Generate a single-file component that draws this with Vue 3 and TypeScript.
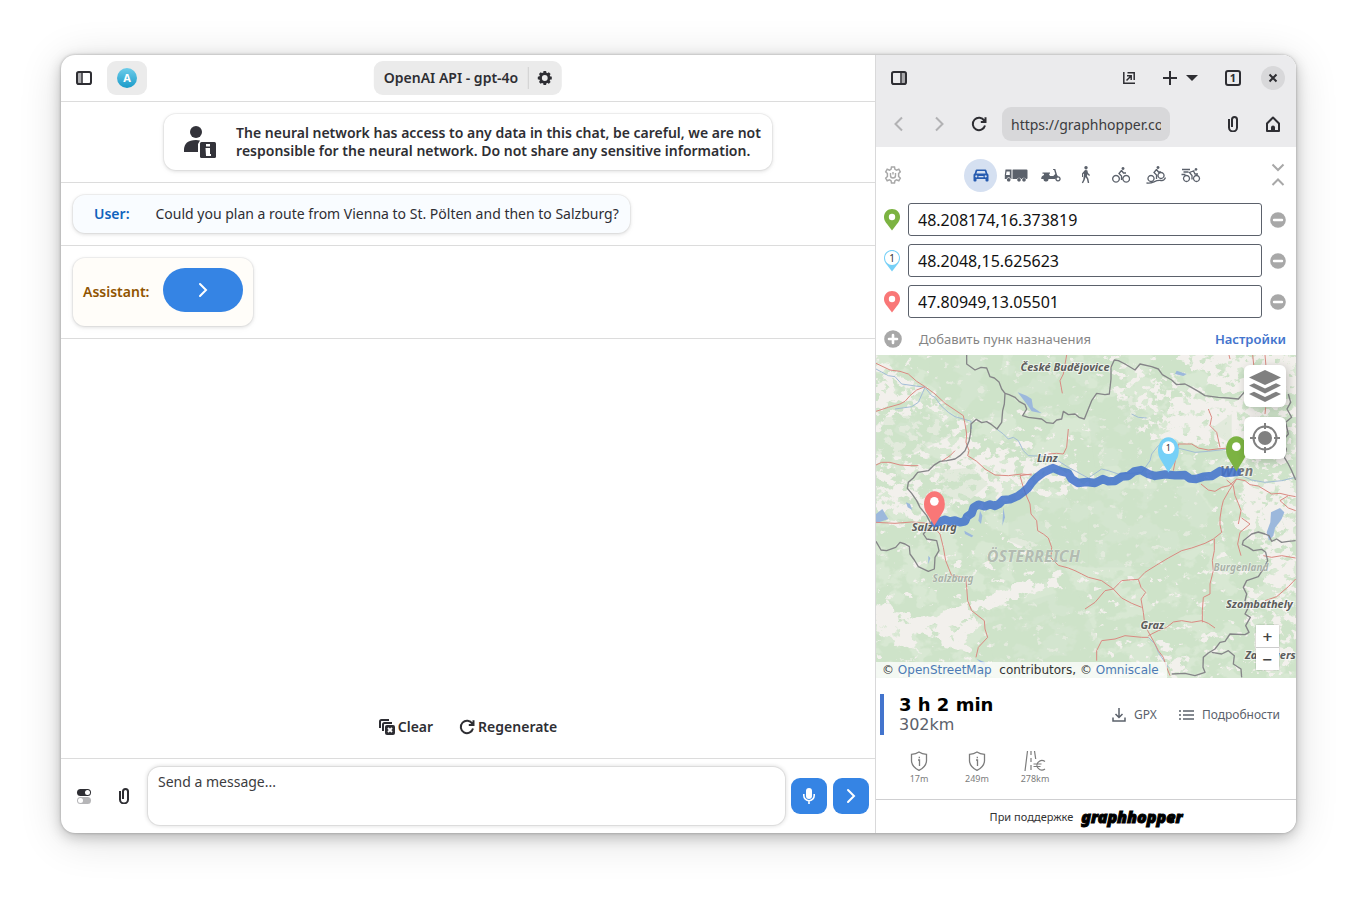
<script setup lang="ts">
import { ref } from 'vue'

interface Stop { id: string; value: string; kind: 'start' | 'via' | 'end'; color: string }
interface Profile { name: string; width: number; box: string; fill?: string; stroke?: string }

const stops = ref<Stop[]>([
  { id: 'stop-1', value: '48.208174,16.373819', kind: 'start', color: '#7cb342' },
  { id: 'stop-2', value: '48.2048,15.625623', kind: 'via', color: '#76d0f7' },
  { id: 'stop-3', value: '47.80949,13.05501', kind: 'end', color: '#f97777' },
])

const profiles: Profile[] = [
  {
    name: 'Car', width: 16, box: '0 0 16 16',
    fill: 'M3.6 2.5h8.8q.8 0 1 .8l1 3.2q1.1.4 1.1 1.7v5.3q0 1-1 1h-1q-1 0-1-1V12h-9v1.5q0 1-1 1h-1q-1 0-1-1V8.200q0-1.300 1.100-1.700l1-3.200q.2-.8 1-.8zM4.200 4l-.8 2.400h9.200L11.800 4zM3.300 8.200a1.100 1.100 0 1 0 .01 0zM12.700 8.200a1.100 1.100 0 1 0 .01 0zM5.500 9v1.200h5V9z',
  },
  {
    name: 'Truck', width: 24, box: '0 0 24 16',
    fill: 'M1.500 2.500h6v9.500h-.6a2.300 2.300 0 0 0-4.400 0H.8V8zM2.600 4.500L2 8h3.800V4.500zM9 2.500h13.500q1 0 1 1v7.500q0 1-1 1h-.5a2.300 2.300 0 0 0-4.200 0h-.6a2.300 2.300 0 0 0-4.200 0H8.500V3q0-.5.5-.5zM4.700 11a1.800 1.800 0 1 0 .01 0zM15 11a1.800 1.800 0 1 0 .01 0zM20 11a1.800 1.800 0 1 0 .01 0z',
  },
  {
    name: 'Scooter', width: 20, box: '0 0 20 16',
    fill: 'M1.500 5.500H9v1.300H7.800L9 9h3.300l2-2-1.200-4h-1V2h2.200l1.800 6 1.200 1.500q-2 0-3 2.500H7.500a2.500 2.500 0 0 1-5 0H.2Q0 9 3 8V6.800H1.500z',
    stroke: 'M17 9.900a2 2 0 1 0 .01 0M5 10.800a1.400 1.400 0 1 0 .01 0',
  },
  {
    name: 'Foot', width: 18, box: '0 0 16 18',
    fill: 'M8 0a1.700 1.700 0 1 0 .01 0zM7 4l2.300.2L10 7l2 2-.8.9-2-1.700-.2 2 1.400 2.500.8 4.300H9.800L8.900 13 7.500 11l-.8 3-1.700 3.200-1.200-.5L5.300 13.500 6 7.500 5 8.300V11H4V7.600z',
  },
  {
    name: 'Bike', width: 18, box: '0 0 18 18',
    fill: 'M11 1a1.500 1.500 0 1 0 .01 0z',
    stroke: 'M4 9.500a3.300 3.300 0 1 0 .01 0M14.200 9.500a3.300 3.300 0 1 0 .01 0M9.500 4.500L7 7.500 9.500 10v4M9.500 4.500L11.500 7h2.500',
  },
  {
    name: 'Mountain bike', width: 20, box: '0 0 20 18',
    fill: 'M12 0a1.500 1.500 0 1 0 .01 0z',
    stroke: 'M5 9.500a3 3 0 1 0 .01 0M15 6.500a3 3 0 1 0 .01 0M10.500 3.500L8 6.500 10.500 9v4M10.500 3.500L12.500 6h2.500M.5 17q4 .5 7.500-1.200T15 14.500t4.500-3',
  },
  {
    name: 'Racing bike', width: 20, box: '0 0 20 18',
    fill: 'M15 2a1.400 1.400 0 1 0 .01 0z',
    stroke: 'M5.500 9.500a3 3 0 1 0 .01 0M15.500 9.500a3 3 0 1 0 .01 0M13.500 4.500L8.500 6.500 11 9.500v4M12.500 5L14 8h3M1 3.500h8M2.500 6h5M.5 8.500h4',
  },
]

const pinPath = 'M8 0C3.500 0 0 3.500 0 8c0 2 .6 3.700 1.700 5.300L8 21.500l6.300-8.200C15.400 11.700 16 10 16 8 16 3.500 12.500 0 8 0z'
const reloadPath = 'M13.300 4.700A6.200 6.200 0 1 0 14 9.500M9.800 6h4.700V1.300'

const route = 'M180 507L195 503 210 497 225 502 240 499 255 505 270 502 276 488 290 478 296 460 310 452 330 457 345 451 360 456 372 450 384 438 405 436 429 426 445 414 459 402 470 386 483 372 505 355 534 342 558 352 579 357 590 375 609 387 635 384 660 387 684 375 700 382 720 381 740 368 760 366 778 352 798 348 820 360 840 366 870 361 900 364 930 363 945 374 963 375 985 368 1011 366 1035 351 1050 357 1086 354'

const borders = [
  'M275 3L275 30 300 48 318 40 335 42 345 68 358 72 372 84 380 105 390 118 388 150 383 170 380 205 366 225 350 212 335 203 320 206 304 196 288 210 287 235 282 262 270 290 255 305 240 315 215 320 195 322 175 335 160 350 128 355 115 372 100 385 97 403 110 418 125 440 135 460 155 485 168 510 155 528 145 540 155 555 185 560 192 590 180 610 178 645 160 652 130 638 118 618 105 600 103 578 90 570 75 565 62 580 35 590 18 588 3 562',
  'M390 118L402 122 420 130 432 142 450 152 455 165 443 185 460 190 500 195 515 206 535 208 545 198 560 195 565 172 580 182 600 180 612 190 628 195 640 165 650 140 665 118 690 122 703 120 708 75 708 40 718 18 730 20 750 30 780 48 795 30 830 38 850 45 862 62 890 78 905 92 930 90 945 98 970 112 990 125 1030 130 1060 132 1090 135 1110 112',
  'M1240 120L1247 145 1236 165 1250 190 1232 205 1240 240 1222 262 1234 285 1228 310 1240 330 1250 350 1262 378',
  'M1262 560L1240 562 1220 565 1205 555 1190 562 1182 545 1170 540 1150 534 1130 540 1105 560 1102 572 1120 580 1135 590 1160 586 1172 595 1178 620 1168 640 1150 668 1115 680 1105 700 1115 720 1110 740 1120 760 1110 780 1126 790 1112 815 1122 835 1110 842 1065 840 1050 862 1035 865 1020 885 1000 897 985 910 984 940 990 955 960 965 930 958 890 960',
  'M1010 895L1040 900 1060 890 1078 905 1075 930 1098 945 1100 970',
]
const roads = [
  'M3 28L45 48 75 52 100 60 125 82 150 98 180 120 210 148 240 168 265 185 270 210 275 240 273 265 282 290 278 305 305 322 330 345 360 363 400 365 440 360 470 363',
  'M150 98L125 108 105 125 90 142 75 150 40 160 3 172', 'M240 290L225 305 200 322', 'M3 333L20 325 45 325 75 333 105 335 130 335',
  'M470 360L435 365 442 390 452 420 465 450 468 480 485 500 488 530 505 540 520 552 530 580 528 612 550 634 580 642 600 650 640 670 680 680 715 705 740 680 760 678 790 676 810 655 850 630 880 612 920 590 950 582 990 568 1015 555 1040 535 1035 512 1035 492 1040 460 1045 440 1062 410 1085 375',
  'M580 225L575 280 565 300 545 298 520 300', 'M575 3L565 60 555 80 562 118',
  'M3 505L60 508 110 504 165 508 195 540 205 580 212 620 230 665 272 670 275 700 278 740 290 770 328 800 330 825 338 850 310 880 303 910',
  'M630 765L660 745 690 710 715 705M715 705L740 732 770 748 800 760',
  'M790 676L798 700 812 715 798 735 805 775 808 800 818 830 832 855 850 890 865 910 875 940 885 965',
  'M820 850L800 850 780 848 750 845 720 855 680 860 665 890 665 920',
  'M820 845L850 830 875 820 895 804 920 800 950 805 980 800 1000 808 1020 822', 'M1018 555L1018 590 1012 620 1015 650 1005 690 1005 720 985 730 982 770 982 805',
  'M1085 375L1110 380 1125 392 1150 396 1170 408 1190 420 1215 418 1240 424 1262 428', 'M1055 378L1075 395 1080 425 1090 448 1098 470 1090 510',
  'M895 350L905 300 910 270 950 270 970 282 1000 288 1035 284 1060 282', 'M1000 165L1010 190 1005 215 1025 235 1035 280',
  'M978 390L1000 408 1020 412 1040 400 1062 395 1085 375', 'M1133 3L1138 50M1170 3L1175 60M1172 160L1170 180',
  'M1165 605L1190 610 1220 605 1262 612', 'M1262 675L1240 698 1205 728 1170 740', 'M1100 492L1125 510 1095 535 1088 570 1098 605',
  'M1240 425L1215 440 1240 462 1262 470', 'M1065 15L1062 3',
]
const rivers = [
  'M3 45L40 65 60 68 80 90 150 100 170 125 180 130 198 155 220 175 240 188 265 195 288 202 290 225M365 225L385 240 400 255 415 250 430 260 445 290 460 305 530 308 580 340 640 372 680 345 700 350 730 360 800 356 825 320 830 300 850 275 900 280 960 295 1000 292 1060 285',
  'M60 165L110 158 130 145 150 100', 'M1100 365L1130 378 1170 385 1220 380 1262 370', 'M820 850L840 870 850 895 880 940',
  'M770 180L790 190 815 192',
]
const lakes = [
  'M428 115L455 125 470 135 474 160 500 178 470 172 455 150z', 'M3 480L22 465 40 495 3 508z',
  'M268 530L295 545 290 550 270 540z', 'M315 470L322 485 318 510 310 500z', 'M385 460L390 490 382 515z',
  'M1188 475L1215 462 1228 475 1220 495 1200 522 1195 545 1182 560 1175 535 1186 505z', 'M160 605L166 612 160 630z',
  'M93 445L105 450 112 468 98 460z', 'M905 50L935 60 925 66 900 60z', 'M305 915L330 925 328 935z',
]
/* Farmland density: the higher the weight, the less forest is left. */
const open: { d: string; o: number }[] = [
  { d: 'M0 0H1270V975H0z', o: 0.16 },
  { d: 'M0 20L100 70 160 110 280 200 300 270 420 240 640 350V420L450 430 300 440 160 500H0z', o: 0.38 },
  { d: 'M0 20L140 100 100 150 0 165zM260 200L310 300 560 330 630 400 420 380 260 440 200 390z', o: 0.45 },
  { d: 'M0 360L90 370 160 500H0z', o: 0.3 },
  { d: 'M720 20L860 50 1040 140 1262 130V380L1080 350 1060 270 830 260 720 150z', o: 0.36 },
  { d: 'M880 130L1100 140 1120 340 1020 270 880 270zM900 0H1262V120L1050 120zM1100 380L1262 380V700L1180 690 1160 570 1080 520z', o: 0.7 },
  { d: 'M0 745L50 760 110 790 180 790 270 740 290 790 320 810 270 850 300 900 230 890 180 840 110 840 120 890 0 830z', o: 0.95 },
  { d: 'M280 750L340 725 390 700 450 670 500 690 565 645 545 700 450 720 400 750 300 775zM400 560L450 550 490 570 440 600zM300 630L340 620 360 650zM210 620L260 615 250 650z', o: 0.9 },
  { d: 'M1120 700L1262 660V960H1090L1130 850z', o: 0.4 },
  { d: 'M830 830L900 880 940 960 870 970zM920 830L1060 860 1030 880 930 850z', o: 0.5 },
]
const woods = [
  'M165 0H380V190H300L160 90z', 'M30 190L180 180 240 240 90 310 0 300z', 'M200 350L290 340 340 390 280 440 200 430z',
  'M400 20H640V160L560 170 480 190 400 110z', 'M400 420L640 440V640L540 620 400 560z', 'M640 410L960 400 1060 540 830 640 640 640z',
  'M640 200L780 120 800 330 660 340z', 'M330 780L600 700 680 880 600 970 360 940z', 'M1000 230L1070 180V270z',
]
</script>

<template>
  <div class="desktop">
    <main class="window">
      <section class="chat">
        <header class="bar">
          <button class="icon-btn" aria-label="Toggle sidebar">
            <svg width="16" height="16" viewBox="0 0 16 16"><rect x="1.500" y="2.500" width="4" height="11" fill="#b0b0b3" /><rect x="1" y="2" width="14" height="12" rx="1.800" class="ln" /><path d="M6 2v12" class="ln thin" /></svg>
          </button>
          <button class="avatar-btn" aria-label="Profile"><span class="avatar">A</span></button>
          <div class="model">
            <button class="model-name">OpenAI API - gpt-4o</button>
            <button class="model-gear" aria-label="Model settings">
              <svg width="16" height="16" viewBox="-8 -8 16 16"><circle r="4.300" fill="none" stroke="#2e2e33" stroke-width="2.800" /><g fill="#2e2e33"><rect v-for="n in 8" :key="n" x="-1.400" y="-7" width="2.800" height="3" rx=".5" :transform="`rotate(${n * 45})`" /></g></svg>
            </button>
          </div>
        </header>

        <div class="row center">
          <div class="card notice">
            <svg width="32" height="32" viewBox="0 0 32 32" fill="#33333a"><circle cx="12" cy="6" r="6" /><path d="M0 26v-2Q0 14 12 14q2.500 0 4 .4L14 18v8z" /><rect x="16" y="16" width="16" height="16" rx="1.500" /><path d="M22 18h4v2.500h-4zM21.500 22H26v6h1v2h-5z" fill="#fff" /></svg>
            <p>The neural network has access to any data in this chat, be careful, we are not<br>responsible for the neural network. Do not share any sensitive information.</p>
          </div>
        </div>

        <div class="row">
          <article class="card user">
            <b>User:</b><span>Could you plan a route from Vienna to St. Pölten and then to Salzburg?</span>
          </article>
        </div>

        <div class="row">
          <article class="card assistant">
            <b>Assistant:</b>
            <button class="pill" aria-label="Continue"><svg width="16" height="16" viewBox="0 0 16 16"><path d="M5 2l6 6-6 6" class="wt" /></svg></button>
          </article>
        </div>

        <div class="actions">
          <button class="text-btn">
            <svg width="16" height="16" viewBox="0 0 16 16"><path d="M1 9V2.500Q1 1 2.500 1H10M4 12V5.500Q4 4 5.500 4H13" class="ln" /><rect x="6" y="6" width="10" height="10" rx="2" fill="#2e2e33" /><path d="M9 9l4 4M13 9l-4 4" stroke="#fff" stroke-width="1.800" /></svg>Clear
          </button>
          <button class="text-btn">
            <svg width="16" height="16" viewBox="0 0 16 16"><path :d="reloadPath" class="ln" /></svg>Regenerate
          </button>
        </div>

        <footer class="composer">
          <button class="icon-btn" aria-label="Options">
            <svg width="16" height="16" viewBox="0 0 16 16"><rect x="1" y="1" width="14" height="7" rx="3.500" fill="#2e2e33" /><circle cx="11.500" cy="4.500" r="2.500" fill="#fff" /><rect x="1" y="9" width="14" height="7" rx="3.500" fill="#b6b6b8" /><circle cx="4.500" cy="12.500" r="2.500" fill="#fff" /></svg>
          </button>
          <button class="icon-btn" aria-label="Attach file">
            <svg width="16" height="16" viewBox="0 0 16 16"><path d="M4 3v8.500a4 4 0 0 0 8 0V3.500a2.500 2.500 0 0 0-5 0V11" class="ln" /></svg>
          </button>
          <textarea aria-label="Message" placeholder="Send a message..."></textarea>
          <button class="blue" aria-label="Record voice">
            <svg width="16" height="16" viewBox="0 0 16 16"><rect x="5" y="0" width="6" height="11" rx="3" fill="#fff" /><path d="M2.800 6v1.500a5.200 5.200 0 0 0 10.400 0V6M8 13v3" fill="none" stroke="#fff" stroke-width="1.600" /></svg>
          </button>
          <button class="blue" aria-label="Send"><svg width="16" height="16" viewBox="0 0 16 16"><path d="M5 2l6 6-6 6" class="wt" /></svg></button>
        </footer>
      </section>

      <aside class="side">
        <div class="tools">
          <div class="tool-row">
            <button class="icon-btn" aria-label="Toggle panel">
              <svg width="16" height="16" viewBox="0 0 16 16"><rect x="10.500" y="2.500" width="4" height="11" fill="#a8a8ab" /><rect x="1" y="2" width="14" height="12" rx="1.800" class="ln" /><path d="M10 2v12" class="ln thin" /></svg>
            </button>
            <span class="grow"></span>
            <button class="icon-btn detach" aria-label="Detach">
              <svg width="12" height="12" viewBox="0 0 12 12"><path d="M.8 0v11.200H12M4.500.8h6.700V8" class="ln thin" /><path d="M3.500 8.500L8 4M4 3.800h4.200V8" class="ln thin" /></svg>
            </button>
            <button class="icon-btn add" aria-label="New tab">
              <svg width="36" height="16" viewBox="0 0 36 16"><path d="M8 1v14M1 8h14" class="ln" /><path d="M24 5h12l-6 6z" fill="#2e2e33" /></svg>
            </button>
            <button class="icon-btn" aria-label="Tabs">
              <svg width="16" height="16" viewBox="0 0 16 16"><rect x="1" y="1" width="14" height="14" rx="2" class="ln" /><text x="8" y="12" text-anchor="middle" class="tab-no">1</text></svg>
            </button>
            <button class="close" aria-label="Close">
              <svg width="10" height="10" viewBox="0 0 10 10"><path d="M1.500 1.500l7 7M8.500 1.500l-7 7" class="ln" /></svg>
            </button>
          </div>
          <div class="tool-row">
            <button class="icon-btn" aria-label="Back"><svg width="16" height="16" viewBox="0 0 16 16"><path d="M11 1.500L4.500 8l6.500 6.500" class="dim" /></svg></button>
            <button class="icon-btn" aria-label="Forward"><svg width="16" height="16" viewBox="0 0 16 16"><path d="M5 1.500L11.500 8 5 14.500" class="dim" /></svg></button>
            <button class="icon-btn" aria-label="Reload"><svg width="16" height="16" viewBox="0 0 16 16"><path :d="reloadPath" class="ln" /></svg></button>
            <input class="url" aria-label="Address" value="https://graphhopper.com/maps/">
            <span class="grow"></span>
            <button class="icon-btn" aria-label="Attach page"><svg width="16" height="16" viewBox="0 0 16 16"><path d="M4 3v8.500a4 4 0 0 0 8 0V3.500a2.500 2.500 0 0 0-5 0V11" class="ln" /></svg></button>
            <button class="icon-btn" aria-label="Home"><svg width="16" height="16" viewBox="0 0 16 16"><path d="M2 7.500L8 1.500l6 6V15H2z" class="ln" stroke-linejoin="round" /><path d="M6 15v-3.500a2 2 0 0 1 4 0V15z" fill="#2e2e33" /></svg></button>
          </div>
        </div>

        <div class="page">
          <div class="profiles">
            <button aria-label="Profile settings">
              <svg width="18" height="18" viewBox="0 0 18 18"><path d="M7.500 1h3l.5 2.300 1.500.8 2.300-.9 1.500 2.600L14.600 7.500v3l1.700 1.700-1.500 2.600-2.300-.9-1.500.8-.5 2.300h-3L7 14.700l-1.500-.8-2.300.9-1.500-2.600L3.400 10.500v-3L1.700 5.800l1.500-2.600 2.300.9L7 3.300z" fill="none" stroke="#a8a8a8" stroke-width="1.500" /><path d="M6.500 7v2.500a2.500 2.500 0 0 0 5 0V7M9 6v2.500" fill="none" stroke="#a8a8a8" stroke-width="1.400" /></svg>
            </button>
            <div class="modes">
              <button v-for="(p, i) in profiles" :key="p.name" :class="['mode', { on: i === 0 }]" :aria-label="p.name">
                <svg :width="p.width" height="18" :viewBox="p.box"><path v-if="p.fill" :d="p.fill" fill="currentColor" fill-rule="evenodd" /><path v-if="p.stroke" :d="p.stroke" fill="none" stroke="currentColor" stroke-width="1.300" /></svg>
              </button>
            </div>
            <button aria-label="Collapse">
              <svg width="14" height="24" viewBox="0 0 14 24"><path d="M1.500 1.500L7 7l5.500-5.500M1.500 22L7 16.500l5.500 5.500" fill="none" stroke="#a8a8a8" stroke-width="2" /></svg>
            </button>
          </div>

          <div class="stops">
            <div v-for="s in stops" :key="s.id" class="stop">
              <label :for="s.id" :aria-label="`Stop ${s.value}`">
                <svg width="16" height="22" viewBox="0 0 16 22"><path :d="pinPath" :fill="s.color" /><circle cx="8" cy="8" :r="s.kind === 'via' ? 7 : 3.200" fill="#fff" /><text v-if="s.kind === 'via'" x="8" y="12" text-anchor="middle" class="pin-no">1</text></svg>
              </label>
              <input :id="s.id" v-model="s.value">
              <button aria-label="Remove stop"><svg width="16" height="16" viewBox="0 0 16 16"><circle cx="8" cy="8" r="7.800" fill="#a8a8a8" /><path d="M4 8h8" stroke="#fff" stroke-width="2.400" stroke-linecap="round" /></svg></button>
            </div>
            <div class="add-row">
              <button class="add-stop"><svg width="18" height="18" viewBox="0 0 18 18"><circle cx="9" cy="9" r="8.800" fill="#a8a8a8" /><path d="M5 9h8M9 5v8" stroke="#fff" stroke-width="2.600" stroke-linecap="round" /></svg><span>Добавить пунк назначения</span></button>
              <a href="#settings">Настройки</a>
            </div>
          </div>

          <div class="map">
            <svg class="tiles" viewBox="3 3 1260 969" preserveAspectRatio="xMidYMid slice" role="img" aria-label="Route map">
              <defs>
                <filter id="farmland" x="0" y="0" width="100%" height="100%" color-interpolation-filters="sRGB">
                  <feTurbulence type="fractalNoise" baseFrequency=".036 .042" numOctaves="5" seed="11" result="t" />
                  <feColorMatrix in="t" values="0 0 0 0 0  0 0 0 0 0  0 0 0 0 0  1 0 0 0 0" result="n" />
                  <feGaussianBlur in="SourceGraphic" stdDeviation="7" result="d" />
                  <feComposite in="d" in2="n" operator="arithmetic" k2=".5" k3="1" result="s" />
                  <feComponentTransfer in="s" result="m"><feFuncA type="linear" slope="12" intercept="-9" /></feComponentTransfer>
                  <feFlood flood-color="#f2f0ec" /><feComposite in2="m" operator="in" />
                </filter>
                <filter id="meadow" x="0" y="0" width="100%" height="100%" color-interpolation-filters="sRGB">
                  <feTurbulence type="fractalNoise" baseFrequency=".012 .016" numOctaves="4" seed="4" />
                  <feColorMatrix values="0 0 0 0 0  0 0 0 0 0  0 0 0 0 0  12 0 0 0 -6" result="m" />
                  <feFlood flood-color="#d8e8d3" /><feComposite in2="m" operator="in" />
                </filter>
              </defs>
              <rect width="1270" height="975" fill="#cee3c9" />
              <rect width="1270" height="975" filter="url(#meadow)" />
              <g filter="url(#farmland)"><path v-for="(a, i) in open" :key="i" :d="a.d" :opacity="a.o" /></g>
              <path v-for="w in woods" :key="w" :d="w" fill="#cee3c9" opacity=".45" />
              <g fill="none" stroke="#a3bdd6" stroke-width="3"><path v-for="r in rivers" :key="r" :d="r" /></g>
              <g fill="#9cb8dc"><path v-for="l in lakes" :key="l" :d="l" /></g>
              <g class="roads"><path v-for="r in roads" :key="r" :d="r" /></g>
              <g class="borders"><path v-for="b in borders" :key="b" :d="b" /></g>
              <g class="places">
                <text x="570" y="51">České Budějovice</text><text x="517" y="324">Linz</text>
                <text x="1085" y="366" class="city">Wien</text><text x="178" y="532">Salzburg</text>
                <text x="832" y="825">Graz</text><text x="1153" y="762">Szombathely</text><text x="1186" y="916" class="mid">Zalaegers</text>
                <text x="475" y="623" class="land">ÖSTERREICH</text><text x="234" y="683" class="state">Salzburg</text><text x="1098" y="650" class="state">Burgenland</text>
              </g>
              <path :d="route" class="route" />
              <g transform="translate(147 412) scale(3.900 4.800)"><path :d="pinPath" fill="#f97777" /></g>
              <circle cx="178" cy="442" r="13" fill="#fff" />
              <g transform="translate(849 250) scale(3.900 4.900)"><path :d="pinPath" fill="#76d0f7" /></g>
              <circle cx="880" cy="281" r="19" fill="#fff" /><text x="880" y="292" text-anchor="middle" class="via">1</text>
              <g transform="translate(1053 247) scale(3.900 4.900)"><path :d="pinPath" fill="#7cb342" /></g>
              <circle cx="1084" cy="278" r="13" fill="#fff" />
            </svg>
            <div class="map-tools">
              <button aria-label="Layers"><svg width="32" height="32" viewBox="0 0 32 32" fill="#808080"><path d="M16 0l16 7.500L16 15 0 7.500zM0 15.500l5-2.300 11 5.300 11-5.300 5 2.300L16 23.500zM0 24l5-2.300L16 27l11-5.300 5 2.300-16 8z" /></svg></button>
              <button aria-label="My location"><svg width="32" height="32" viewBox="0 0 32 32"><circle cx="16" cy="16" r="7" fill="#808080" /><circle cx="16" cy="16" r="11.500" fill="none" stroke="#808080" stroke-width="2" /><path d="M16 1v6M16 25v6M1 16h6M25 16h6" stroke="#808080" stroke-width="2" /></svg></button>
            </div>
            <div class="zoom"><button aria-label="Zoom in">+</button><button aria-label="Zoom out">−</button></div>
            <div class="credit">© <a href="#osm">OpenStreetMap</a>&nbsp; contributors, © <a href="#omniscale">Omniscale</a></div>
          </div>

          <div class="result">
            <div class="summary">
              <div class="totals"><strong>3 h 2 min</strong><span>302km</span></div>
              <button><svg width="14" height="14" viewBox="0 0 14 14"><path d="M7 0v9M3.500 6L7 9.500 10.500 6M1 9.500V13h12V9.500" fill="none" stroke="#5b616b" stroke-width="1.500" /></svg>GPX</button>
              <button><svg width="15" height="10" viewBox="0 0 15 10"><path d="M0 1h2M0 5h2M0 9h2M4 1h11M4 5h11M4 9h11" stroke="#5b616b" stroke-width="1.500" /></svg>Подробности</button>
            </div>
            <div class="hints">
              <button v-for="t in ['17m', '249m']" :key="t"><svg width="18" height="20" viewBox="0 0 18 20"><path d="M9 1Q12 3 16.500 3.300V10Q16 16 9 19.300 2 16 1.500 10V3.300Q6 3 9 1zM8 9h1.500v6M9.300 5.800v1.500" fill="none" stroke="#7c7c7c" stroke-width="1.300" /></svg>{{ t }}</button>
              <button><svg width="22" height="20" viewBox="0 0 22 20"><path d="M3.500 0L1 20M7 0v4M7 7v4M7 14v5M10.500 0l1.200 8M21 10.500a5 4.700 0 1 0 0 7.500M9.500 13h8M9.500 15.500h7" fill="none" stroke="#7c7c7c" stroke-width="1.200" /></svg>278km</button>
            </div>
          </div>
          <div class="powered">При поддержке <a href="#graphhopper">graphhopper</a></div>
        </div>
      </aside>
    </main>
  </div>
</template>

<style>
body { margin: 0; background: #fff; }
</style>

<style scoped>
* { box-sizing: border-box; }
button { border: 0; padding: 0; background: none; font: inherit; color: inherit; display: flex; align-items: center; justify-content: center; }
svg { flex: none; display: block; }
.desktop { min-height: 100vh; padding: 55px 61px 67px; display: flex; font: 14px/18px "Noto Sans", sans-serif; color: #2e2e33; }
.window { flex: 1; min-width: 0; display: flex; border-radius: 14px; overflow: hidden; background: #fff; box-shadow: 0 0 3px rgba(0, 0, 0, .28), 0 4px 14px rgba(0, 0, 0, .22), 0 6px 44px rgba(0, 0, 0, .14); }
.ln { fill: none; stroke: #2e2e33; stroke-width: 2; }
.thin { stroke-width: 1.500; }
.wt { fill: none; stroke: #fff; stroke-width: 2; stroke-linecap: round; }
.dim { fill: none; stroke: #b2b2b4; stroke-width: 2; }
.grow { flex: 1; }

.chat { flex: 1; min-width: 0; display: flex; flex-direction: column; }
.bar { height: 47px; border-bottom: 1px solid #dcdcdc; display: grid; grid-template-columns: auto auto 1fr; align-items: center; padding: 0 6px; gap: 6px; position: relative; }
.icon-btn { width: 34px; height: 34px; }
.avatar-btn { width: 40px; height: 34px; border-radius: 9px; background: #ebebeb; }
.avatar { width: 20px; height: 20px; border-radius: 50%; background: linear-gradient(#6ecdea, #1a9bc9); color: #fff; font: bold 11px/20px "Noto Sans", sans-serif; }
.model { position: absolute; left: 50%; transform: translateX(-50%); height: 34px; display: flex; align-items: center; background: #ebebeb; border-radius: 9px; font-weight: 600; white-space: nowrap; }
.model-name { padding: 0 10px; }
.model-gear { height: 22px; padding: 0 9px 0 8px; border-left: 1px solid #cfcfcf; }

.row { border-bottom: 1px solid #dcdcdc; padding: 12px; display: flex; }
.row.center { justify-content: center; }
.card { border-radius: 12px; background: #fff; box-shadow: 0 0 0 1px rgba(0, 0, 0, .04), 0 1px 3px 1px rgba(0, 0, 0, .08), 0 2px 6px 1px rgba(0, 0, 0, .03); display: flex; }
.card b { font-weight: 600; }
.notice { min-height: 56px; padding: 10px 11px 10px 20px; gap: 20px; align-items: center; font-weight: 600; }
.notice p { margin: 0; }
.user { min-height: 38px; padding: 10px 11px 10px 21px; gap: 26px; background: #f9fcff; }
.user b { color: #0f63bd; }
.assistant { padding: 10px 10px 14px; gap: 14px; align-items: center; background: #fffdf9; }
.assistant b { color: #905400; padding-top: 4px; }
.pill { width: 80px; height: 44px; border-radius: 22px; background: #3584e4; }
.actions { margin-top: auto; display: flex; justify-content: center; gap: 26px; padding: 0 0 22px; font-weight: 600; }
.text-btn { gap: 3px; }
.composer { min-height: 75px; border-top: 1px solid #dcdcdc; padding: 8px 6px; display: flex; align-items: center; gap: 6px; }
.composer textarea { flex: 1; min-width: 0; height: 58px; margin-left: 1px; border: 0; border-radius: 12px; outline: 0; resize: none; padding: 6px 10px; font: inherit; color: inherit; box-shadow: 0 0 0 1px rgba(0, 0, 0, .06), 0 0 4px 1px rgba(0, 0, 0, .14); }
.composer textarea::placeholder { color: #3c3c40; opacity: 1; }
.blue { width: 36px; height: 36px; border-radius: 9px; background: #3584e4; }

.side { width: 421px; border-left: 1px solid #d9d9da; display: flex; flex-direction: column; background: #fff; }
.tools { background: #ebebed; }
.tool-row { height: 46px; display: flex; align-items: center; padding: 0 6px; gap: 6px; }
.detach { width: 30px; }
.add { width: 60px; }
.close { width: 24px; height: 24px; margin: 0 5px; border-radius: 50%; background: #d8d8da; }
.tab-no { font: bold 11px "Noto Sans", sans-serif; fill: #2e2e33; }
.url { width: 168px; height: 34px; border: 0; border-radius: 9px; padding: 0 9px; background: #d8d8da; font: inherit; color: #3c3c40; outline: 0; }

.page { flex: 1; display: flex; flex-direction: column; color: #5b616b; }
.profiles { height: 56px; display: flex; align-items: center; justify-content: space-between; padding: 0 11px 0 8px; }
.modes { display: flex; gap: 2px; margin-right: 2px; }
.mode { width: 33px; height: 33px; border-radius: 50%; color: #5b616b; }
.mode.on { background: #d5e0f1; color: #265bb0; }
.stops { display: flex; flex-direction: column; gap: 8px; padding: 0 10px 0 8px; }
.stop { display: flex; align-items: center; gap: 8px; }
.stop input { flex: 1; min-width: 0; height: 33px; border: 1px solid #5b616b; border-radius: 3px; padding: 0 9px; font: 16px "Noto Sans", sans-serif; color: #111; outline: 0; }
.pin-no { font: 10px "Noto Sans", sans-serif; fill: #333; }
.add-row { display: flex; align-items: center; justify-content: space-between; min-height: 29px; padding-bottom: 4px; font-size: 13px; }
.add-stop { gap: 17px; color: #858585; }
.add-row a { color: #4374cd; font-weight: 600; text-decoration: none; }

.map { flex: 1; min-height: 300px; position: relative; overflow: hidden; }
.tiles { position: absolute; width: 100%; height: 100%; }
.roads { fill: none; stroke: #da8a82; stroke-width: 3; stroke-linejoin: round; }
.borders { fill: none; stroke: #858588; stroke-width: 4; stroke-linejoin: round; }
.route { fill: none; stroke: #4171cb; stroke-opacity: .85; stroke-width: 25; stroke-linejoin: round; stroke-linecap: round; }
.places text { font: italic bold 33px "Noto Sans", sans-serif; fill: #5c5c5c; stroke: #fff; stroke-opacity: .6; stroke-width: 6; paint-order: stroke; text-anchor: middle; }
.places .city { font-size: 42px; fill: #777; }
.places .land { font-size: 48px; fill: #b3bcb2; stroke-width: 2; }
.places .state { font-size: 30px; fill: #a9b2a8; stroke-width: 3; }
.via { font: 27px "Noto Sans", sans-serif; fill: #333; }
.map-tools { position: absolute; top: 10px; right: 10px; display: grid; gap: 10px; }
.map-tools button { width: 42px; height: 42px; border-radius: 6px; background: #fff; box-shadow: 2px 2px 10px rgba(0, 0, 0, .2); }
.zoom { position: absolute; right: 17px; bottom: 8px; display: grid; gap: 1px; background: #ccc; border-radius: 2px; box-shadow: 0 0 0 1px rgba(0, 0, 0, .08); }
.zoom button { width: 23px; height: 22px; background: #fff; color: #444; font: bold 13px "DejaVu Sans", sans-serif; }
.credit { position: absolute; left: 0; bottom: 0; padding: 0 8px 0 6px; background: rgba(255, 255, 255, .75); font: 12px/16px "DejaVu Sans", sans-serif; color: #333; white-space: nowrap; }
.credit a { color: #4d7bb5; text-decoration: none; }

.result { padding: 16px 16px 14px 4px; }
.summary { display: flex; align-items: center; gap: 22px; font-size: 12px; }
.summary button { gap: 8px; }
.totals { flex: 1; border-left: 4px solid #4374cd; padding-left: 15px; font: 16px/20px "DejaVu Sans", sans-serif; display: grid; }
.totals strong { font-size: 18px; line-height: 21px; color: #000; }
.hints { display: flex; padding: 16px 0 0 10px; font-size: 9px; line-height: 12px; color: #7c7c7c; }
.hints button { width: 58px; flex-direction: column; gap: 2px; }
.powered { height: 34px; border-top: 1px solid #cfcfd1; display: flex; align-items: center; justify-content: center; gap: 8px; font-size: 11px; color: #333; }
.powered a { font: italic 900 16px/20px "Noto Sans", sans-serif; -webkit-text-stroke: 1px #000; color: #000; text-decoration: none; }
</style>
